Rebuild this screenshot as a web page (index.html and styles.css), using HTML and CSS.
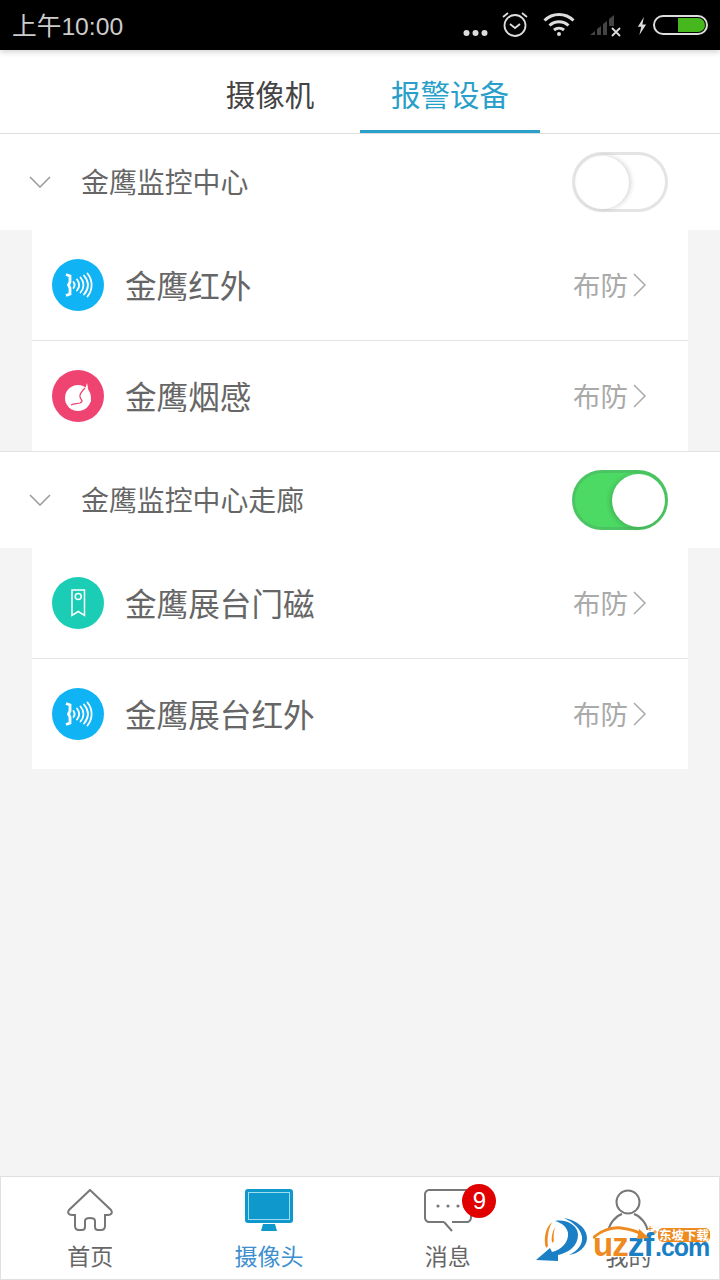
FILE: index.html
```html
<!doctype html>
<html>
<head>
	<meta http-equiv="content-type" content="text/html;charset=utf-8"/>
	<title>报警设备</title>
	<link rel="stylesheet" href="styles.css">
</head>
<body>
	<div id="wrapper">
		<div class="status">
			<span class="time">上午10:00</span>
			<div class="status-icons">
				<svg class="dots" width="25" height="8" viewBox="0 0 25 8"><circle cx="3.500" cy="4" r="3" fill="#ddd"/><circle cx="12.500" cy="4" r="3" fill="#ddd"/><circle cx="21.500" cy="4" r="3" fill="#ddd"/></svg>
				<svg class="alarm" width="28" height="28" viewBox="0 0 28 28" fill="none" stroke="#ddd"><circle cx="14" cy="15.500" r="10.500" stroke-width="1.800"/><path d="M9 14l5 4 5-4" stroke-width="1.800"/><path d="M2 7l5-4M26 7l-5-4" stroke-width="1.800"/></svg>
				<svg class="wifi" width="32" height="26" viewBox="0 0 32 26" fill="none" stroke="#ddd" stroke-width="3"><path d="M1.500 9.500c8-8 21-8 29 0"/><path d="M6.500 14.500c5.500-5 13.500-5 19 0"/><path d="M11 19c3-2.500 7-2.500 10 0"/><circle cx="16" cy="23" r="2" fill="#ddd" stroke="none"/></svg>
				<svg class="signal" width="32" height="24" viewBox="0 0 32 24"><path d="M0 22l5-4v4zM7 16l4-3v9H7zM13 11l4-3v14h-4zM19 6l5-4v11h-5z" fill="#444"/><path d="M22 15l8 8M30 15l-8 8" stroke="#ddd" stroke-width="1.800"/></svg>
				<svg class="bolt" width="12" height="18" viewBox="0 0 13 24"><path d="M9 0L1 13h4.500L3 24l9-14H7z" fill="#ddd"/></svg>
				<div class="battery"><div class="battery-fill"></div></div>
			</div>
		</div>

		<div class="tabs">
			<div class="tab">摄像机</div>
			<div class="tab tab-on">报警设备</div>
		</div>

		<div class="group group-first">
			<svg class="fold" width="22" height="12" viewBox="0 0 22 12" fill="none" stroke="#999" stroke-width="1.500"><path d="M1 1l10 10L21 1"/></svg>
			<span class="group-name">金鹰监控中心</span>
			<div class="switch"><div class="knob"></div></div>
		</div>
		<div class="items">
			<div class="item">
				<div class="dot dot-blue">
					<svg width="52" height="52" viewBox="0 0 52 52" fill="none" stroke="#fff"><path d="M14 15.500l4 1.500v6l-1.500 3 1.500 3v6l-4 1.500" stroke-width="2.800"/><path d="M21.500 23c1.500 2 1.500 4 0 6" stroke-width="1.800" stroke-linecap="round"/><path d="M25 20.500c2.800 3.500 2.800 7.500 0 11" stroke-width="1.800" stroke-linecap="round"/><path d="M28.500 18.500c4 4.500 4 10.500 0 15" stroke-width="1.800" stroke-linecap="round"/><path d="M32 16.500c5 6 5 13 0 19" stroke-width="1.800" stroke-linecap="round"/><path d="M35.500 14.500c5.500 7 5.500 16 0 23" stroke-width="1.800" stroke-linecap="round"/></svg>
				</div>
				<span class="item-name">金鹰红外</span>
				<span class="arm">布防</span>
				<svg class="more" width="14" height="24" viewBox="0 0 14 24" fill="none" stroke="#aaa" stroke-width="1.500"><path d="M1 1l11 11L1 23"/></svg>
			</div>
			<div class="item">
				<div class="dot dot-red">
					<svg width="52" height="52" viewBox="0 0 52 52"><circle cx="26" cy="28" r="13" fill="#fff"/><path d="M35 13c1 5 2 9 1 12 2 3 3 5 3 7l-9-2z" fill="#fff"/><path d="M33 18c-3 3-6 6-5 9 1 3 4 4 0 6-3 1-6 0-9 2" fill="none" stroke="#ef4472" stroke-width="1.300"/></svg>
				</div>
				<span class="item-name">金鹰烟感</span>
				<span class="arm">布防</span>
				<svg class="more" width="14" height="24" viewBox="0 0 14 24" fill="none" stroke="#aaa" stroke-width="1.500"><path d="M1 1l11 11L1 23"/></svg>
			</div>
		</div>

		<div class="group">
			<svg class="fold" width="22" height="12" viewBox="0 0 22 12" fill="none" stroke="#999" stroke-width="1.500"><path d="M1 1l10 10L21 1"/></svg>
			<span class="group-name">金鹰监控中心走廊</span>
			<div class="switch switch-on"><div class="knob"></div></div>
		</div>
		<div class="items">
			<div class="item">
				<div class="dot dot-green">
					<svg width="52" height="52" viewBox="0 0 52 52" fill="none" stroke="#fff" stroke-width="1.500"><path d="M20 13h12.500v25.500l-6.250-4-6.250 4z"/><circle cx="26.250" cy="19.500" r="3"/></svg>
				</div>
				<span class="item-name">金鹰展台门磁</span>
				<span class="arm">布防</span>
				<svg class="more" width="14" height="24" viewBox="0 0 14 24" fill="none" stroke="#aaa" stroke-width="1.500"><path d="M1 1l11 11L1 23"/></svg>
			</div>
			<div class="item">
				<div class="dot dot-blue">
					<svg width="52" height="52" viewBox="0 0 52 52" fill="none" stroke="#fff"><path d="M14 15.500l4 1.500v6l-1.500 3 1.500 3v6l-4 1.500" stroke-width="2.800"/><path d="M21.500 23c1.500 2 1.500 4 0 6" stroke-width="1.800" stroke-linecap="round"/><path d="M25 20.500c2.800 3.500 2.800 7.500 0 11" stroke-width="1.800" stroke-linecap="round"/><path d="M28.500 18.500c4 4.500 4 10.500 0 15" stroke-width="1.800" stroke-linecap="round"/><path d="M32 16.500c5 6 5 13 0 19" stroke-width="1.800" stroke-linecap="round"/><path d="M35.500 14.500c5.500 7 5.500 16 0 23" stroke-width="1.800" stroke-linecap="round"/></svg>
				</div>
				<span class="item-name">金鹰展台红外</span>
				<span class="arm">布防</span>
				<svg class="more" width="14" height="24" viewBox="0 0 14 24" fill="none" stroke="#aaa" stroke-width="1.500"><path d="M1 1l11 11L1 23"/></svg>
			</div>
		</div>

		<div class="spacer"></div>

		<div class="nav">
			<div class="nav-item">
				<svg width="46" height="44" viewBox="0 0 46 44" fill="none" stroke="#777" stroke-width="2"><path d="M23 1L2 21c-2 3 0 5 3 5h3v11c0 3 2 4 4 4h3c2 0 3-1 3-3v-6c0-2 2-3 5-3s5 1 5 3v6c0 2 1 3 3 3h3c2 0 4-1 4-4V26h3c3 0 5-2 3-5z"/></svg>
				<span>首页</span>
			</div>
			<div class="nav-item nav-on">
				<svg width="48" height="44" viewBox="0 0 48 44"><rect x="0" y="0" width="48" height="34" rx="3" fill="#0e98cc"/><rect x="3.500" y="3.500" width="41" height="27" fill="#0e98cc" stroke="#9fdcf2" stroke-width="1"/><path d="M18 35h12l2 7H16z" fill="#0e98cc"/></svg>
				<span>摄像头</span>
			</div>
			<div class="nav-item">
				<svg width="48" height="44" viewBox="0 0 48 44" fill="none" stroke="#777" stroke-width="2"><path d="M5 1h38c2 0 4 2 4 4v24c0 2-2 4-4 4H28M20 33H5c-2 0-4-2-4-4V5c0-2 2-4 4-4"/><path d="M20 33l8 9"/><circle cx="14" cy="17" r="1.600" fill="#777" stroke="none"/><circle cx="24" cy="17" r="1.600" fill="#777" stroke="none"/><circle cx="34" cy="17" r="1.600" fill="#777" stroke="none"/></svg>
				<span>消息</span>
				<div class="badge">9</div>
			</div>
			<div class="nav-item nav-last">
				<svg width="48" height="44" viewBox="0 0 48 44" fill="none" stroke="#777" stroke-width="2"><circle cx="24" cy="13" r="11.500"/><path d="M4 44c1-10 8-17 14-19M44 44c-1-10-8-17-14-19"/></svg>
				<span>我的</span>
			</div>
			<div class="mark">
				<svg class="mark-logo" width="52" height="46" viewBox="0 0 52 46"><path d="M19 3C30 1 42 7 42 17c0 11-10 18-20 20v6L0 42l14-12 2 4c9-2 17-10 16-19-1-6-6-10-13-12z" fill="#1a7fc4"/><path d="M28 0c12 2 23 10 23 20 0 9-9 16-18 17 8-4 14-10 13-18C45 11 37 4 28 0z" fill="#1a7fc4"/><path d="M16 4C10 9 7 20 10 30l2-2c-1-8 0-16 4-24zM19 9c-3 5-4 11-3 16l2-2c-1-5 0-9 1-14z" fill="#ee8a1f"/></svg>
				<div class="mark-word">
					<span class="mark-u">uz<span class="mark-blue">zf</span></span>
					<span class="mark-com">.com</span>
				</div>
				<svg class="mark-arc" width="68" height="18" viewBox="0 0 68 18" fill="none"><path d="M0 12C8 4 20 1 28 2c8 1 16 3 22 7" stroke="#ee8a1f" stroke-width="3"/><path d="M46 3l10 9-12 1z" fill="#ee8a1f"/><path d="M57 0v5M54.500 2.500h5M62 4v4M60 6h4" stroke="#ee8a1f" stroke-width="1"/></svg>
				<span class="mark-tag">东坡下载</span>
			</div>
		</div>
	</div>
</body>
</html>
```

FILE: styles.css
```css
html, body {
    margin: 0;
    padding: 0;
}
body {
    font-family: "Noto Sans CJK SC", "Liberation Sans", sans-serif;
    font-weight: 400;
    color: #666;
    background: #f4f4f4;
}

/* layouts */
#wrapper {
    width: 720px;
    height: 1280px;
    display: flex;
    flex-direction: column;
    overflow: hidden;
}
.spacer {
    flex: 1;
}

/* status bar */
.status {
    height: 50px;
    flex: none;
    background: #000;
    display: flex;
    align-items: center;
    justify-content: space-between;
    padding: 0 12px;
    box-sizing: border-box;
    box-shadow: 0 2px 6px rgba(0,0,0,.18);
    position: relative;
}
.time {
    font-family: "Liberation Sans", "Noto Sans CJK SC", sans-serif;
    font-size: 24.700px;
    color: #ccc;
    margin-bottom: 3px;
}
.status-icons {
    display: flex;
    align-items: center;
}
.dots {
    margin: 16px 0 0 0;
}
.alarm {
    margin: -2px 0 0 13px;
}
.wifi {
    margin: 0 0 2px 14px;
}
.signal {
    margin: 0 0 0 15px;
}
.bolt {
    margin: 1px 0 0 14px;
}
.battery {
    width: 55px;
    height: 20px;
    margin-left: 5px;
    border: 2px solid #ddd;
    border-radius: 10px;
    display: flex;
    justify-content: flex-end;
    align-items: center;
    padding: 0 1px 0 0;
    box-sizing: border-box;
}
.battery-fill {
    width: 27px;
    height: 14px;
    background: #46b81e;
    border-radius: 0 7px 7px 0;
}

/* tabs */
.tabs {
    height: 83px;
    flex: none;
    background: #fff;
    border-bottom: 1px solid #ddd;
    display: flex;
    justify-content: center;
}
.tab {
    width: 180px;
    text-align: center;
    font-size: 29.500px;
    line-height: 87px;
    color: #444;
    box-sizing: border-box;
}
.tab-on {
    color: #2a9fc9;
    border-bottom: 3px solid #2a9fc9;
    height: 83px;
}

/* groups */
.group {
    height: 96px;
    flex: none;
    background: #fff;
    border-top: 1px solid #e2e2e2;
    display: flex;
    align-items: center;
    position: relative;
}
.group-first {
    border-top: none;
}
.fold {
    margin: 0 0 0 29px;
}
.group-name {
    font-size: 27.900px;
    margin: 0 0 2px 30px;
    flex: 1;
    color: #666;
}
.switch {
    width: 96px;
    height: 60px;
    margin-right: 52px;
    border-radius: 30px;
    border: 3px solid #e4e4e4;
    box-sizing: border-box;
    background: #fff;
    display: flex;
    align-items: center;
    padding: 0 1px;
}
.switch-on {
    background: #4cd964;
    border-color: #4cc463;
    justify-content: flex-end;
    padding: 0;
}
.knob {
    width: 53px;
    height: 53px;
    border-radius: 50%;
    background: #fff;
    box-shadow: 2px 0 5px rgba(0,0,0,.16);
}
.switch-on .knob {
    box-shadow: -2px 1px 5px rgba(0,0,0,.16);
}

/* rows */
.items {
    margin: 0 32px;
    background: #fff;
    flex: none;
}
.item {
    height: 110px;
    display: flex;
    align-items: center;
    padding: 0 41px 0 20px;
}
.item + .item {
    border-top: 1px solid #e4e4e4;
}
.dot {
    width: 52px;
    height: 52px;
    border-radius: 50%;
    flex: none;
}
.dot svg {
    display: block;
}
.dot-blue {
    background: #10b4f5;
}
.dot-red {
    background: #ef4472;
}
.dot-green {
    background: #1bcdb5;
}
.item-name {
    font-size: 31.600px;
    margin: 0 0 2px 21px;
    flex: 1;
}
.arm {
    font-size: 27.500px;
    color: #aaa;
    margin-bottom: 2px;
}
.more {
    margin-left: 5px;
}

/* bottom nav */
.nav {
    height: 104px;
    flex: none;
    background: #fff;
    border: 1px solid #e0e0e0;
    box-sizing: border-box;
    display: flex;
    position: relative;
}
.nav-item {
    width: 178.700px;
    display: flex;
    flex-direction: column;
    align-items: center;
    padding-top: 12px;
    position: relative;
    font-size: 23px;
    color: #666;
    line-height: 30px;
}
.nav-item svg {
    display: block;
    margin-bottom: 7px;
}
.nav-last {
    margin-left: 2px;
}
.nav-on {
    color: #3d8fcf;
}
.badge {
    position: absolute;
    left: 104px;
    top: 7px;
    width: 34px;
    height: 34px;
    border-radius: 50%;
    background: #e00000;
    color: #fff;
    font-family: "Liberation Sans", sans-serif;
    font-size: 24px;
    line-height: 34px;
    text-align: center;
}

/* watermark over the last tab */
.mark {
    position: absolute;
    left: 535px;
    top: 41px;
    width: 180px;
    height: 52px;
    font-family: "Liberation Sans", sans-serif;
    font-weight: bold;
}
.mark-logo {
    position: absolute;
    left: 0;
    top: 0;
}
.mark-word {
    position: absolute;
    left: 55px;
    top: 12px;
    width: 122px;
    height: 27px;
    background: #fff;
}
.mark-u {
    position: absolute;
    left: 2px;
    top: -2px;
    color: #ee8a1f;
    font-size: 33px;
    line-height: 33px;
    letter-spacing: -1px;
}
.mark-blue {
    color: #1a7fc4;
}
.mark-com {
    position: absolute;
    left: 64px;
    top: 5px;
    color: #1a7fc4;
    font-size: 25px;
    line-height: 25px;
    letter-spacing: -1px;
}
.mark-arc {
    position: absolute;
    left: 57px;
    top: 8px;
}
.mark-tag {
    position: absolute;
    left: 122px;
    top: 10px;
    width: 52px;
    height: 14px;
    background: #ee8a1f;
    color: #fff;
    font-family: "Noto Sans CJK SC", sans-serif;
    font-size: 12.500px;
    font-weight: 700;
    line-height: 14px;
    text-align: center;
    white-space: nowrap;
    border-radius: 5px;
}
```
